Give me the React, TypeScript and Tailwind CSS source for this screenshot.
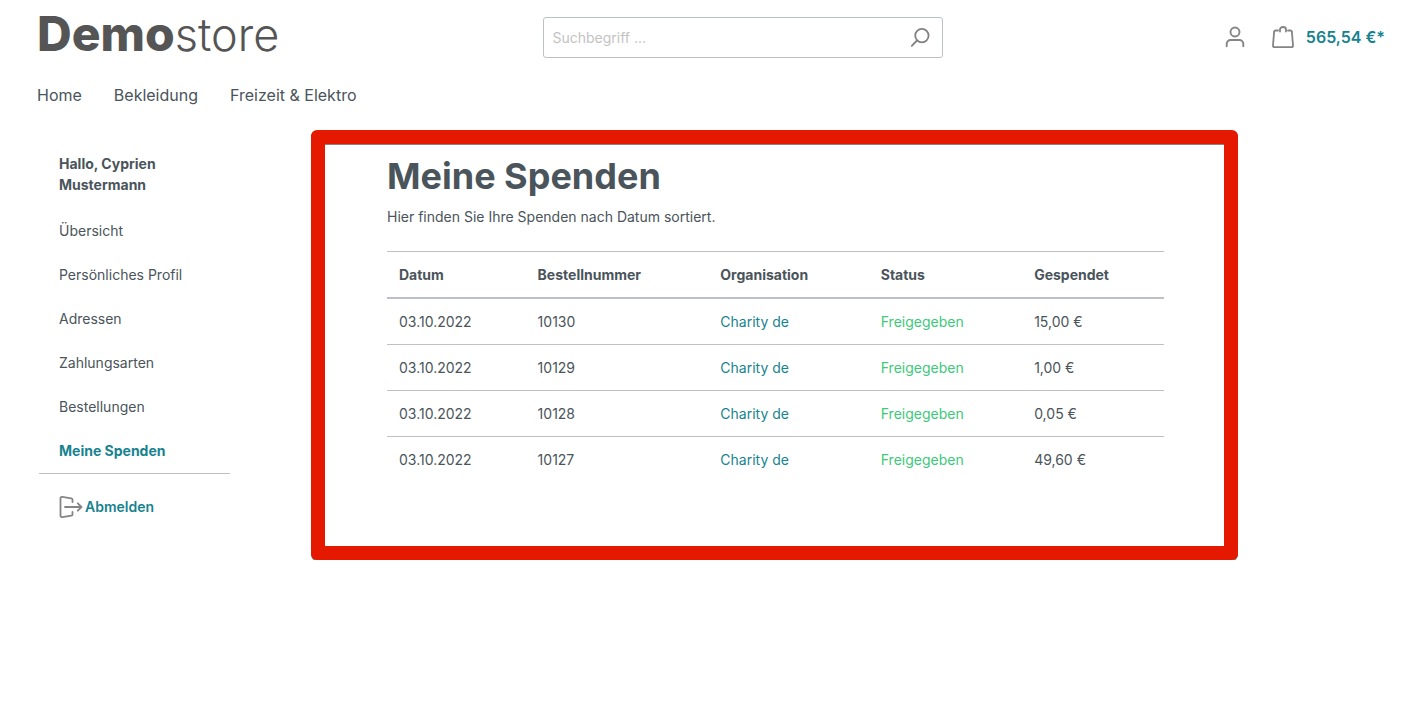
import React from 'react'
import { clsx } from 'clsx'

const navItems = [
    { name: 'Home', href: '#' },
    { name: 'Bekleidung', href: '#bekleidung' },
    { name: 'Freizeit & Elektro', href: '#freizeit' },
]

const accountItems = [
    { name: 'Übersicht', href: '#uebersicht' },
    { name: 'Persönliches Profil', href: '#profil' },
    { name: 'Adressen', href: '#adressen' },
    { name: 'Zahlungsarten', href: '#zahlungsarten' },
    { name: 'Bestellungen', href: '#bestellungen' },
    { name: 'Meine Spenden', href: '#spenden', active: true },
]

const columns = ['Datum', 'Bestellnummer', 'Organisation', 'Status', 'Gespendet']

const donations = [
    { date: '03.10.2022', order: '10130', organisation: 'Charity de', status: 'Freigegeben', amount: '15,00 €' },
    { date: '03.10.2022', order: '10129', organisation: 'Charity de', status: 'Freigegeben', amount: '1,00 €' },
    { date: '03.10.2022', order: '10128', organisation: 'Charity de', status: 'Freigegeben', amount: '0,05 €' },
    { date: '03.10.2022', order: '10127', organisation: 'Charity de', status: 'Freigegeben', amount: '49,60 €' },
]

export default function App() {
    return (
        <div className="font-['Inter',sans-serif] text-sm text-[#4a545b]">
            <Header />
            <div className="flex items-start pl-[39px] pr-[166px] pt-4">
                <AccountSidebar />
                <Donations />
            </div>
        </div>
    )
}

const Header = () => (
    <header className="pl-[37px] pr-[19px] pt-[7px]">
        <div className="flex min-h-15 items-center">
            <a href="#" className="w-[37.5%] self-start text-5xl leading-[54px] text-[#555]">
                <span className="font-extrabold">Demo</span>
                <span className="text-[45px] font-light">store</span>
            </a>
            <form
                className="flex h-[41px] w-[400px] items-center rounded-[3px] border border-[#bcc1c7]"
                onSubmit={(e) => e.preventDefault()}>
                <input
                    type="search"
                    aria-label="Suchbegriff"
                    placeholder="Suchbegriff ..."
                    className="h-full min-w-0 flex-1 px-[9px] outline-none placeholder:text-[#c3c3c3]"
                />
                <button type="submit" aria-label="Suchen" className="px-3">
                    <SearchIcon />
                </button>
            </form>
            <div className="flex flex-1 items-center justify-end">
                <button type="button" aria-label="Mein Konto" className="mr-[26px]">
                    <AvatarIcon />
                </button>
                <a href="#warenkorb" className="flex items-center gap-3 text-base font-semibold text-[#17838f]">
                    <BagIcon />
                    565,54 €*
                </a>
            </div>
        </div>
        <nav className="flex gap-8 pb-[7px] pt-4 text-base">
            {navItems.map((item) => (
                <a key={item.name} href={item.href}>
                    {item.name}
                </a>
            ))}
        </nav>
    </header>
)

const AccountSidebar = () => (
    <aside className="w-[191px] shrink-0 pt-[23px]">
        <p className="px-5 pb-[14px] font-bold leading-[21px]">Hallo, Cyprien Mustermann</p>
        <ul className="border-b border-[#bcc1c7]">
            {accountItems.map((item) => (
                <li key={item.name}>
                    <a
                        href={item.href}
                        className={clsx('block px-5 py-3', item.active && 'font-bold text-[#17838f]')}>
                        {item.name}
                    </a>
                </li>
            ))}
        </ul>
        <a href="#abmelden" className="flex items-center gap-[2px] px-5 py-[22px] font-semibold text-[#17838f]">
            <LogoutIcon />
            Abmelden
        </a>
    </aside>
)

const Donations = () => (
    <main className="ml-[81px] flex-1 rounded-md bg-[#e51900] p-[14px] shadow-[0_1px_0_#858585]">
        <div className="border-t border-[#858585] bg-white pb-16 pl-[62px] pr-[60px] pt-[7px]">
            <h1 className="text-4xl font-bold leading-12">Meine Spenden</h1>
            <p className="pb-6 pt-[7px]">Hier finden Sie Ihre Spenden nach Datum sortiert.</p>
            <table className="w-full border-t border-[#bcc1c7] text-left">
                <thead>
                    <tr className="border-b-2 border-[#bcc1c7]">
                        {columns.map((column) => (
                            <th key={column} className="px-3 py-3 font-bold leading-[21px]">
                                {column}
                            </th>
                        ))}
                    </tr>
                </thead>
                <tbody className="divide-y divide-[#bcc1c7]">
                    {donations.map((donation) => (
                        <tr key={donation.order} className="leading-[21px]">
                            <td className="p-3">{donation.date}</td>
                            <td className="p-3">{donation.order}</td>
                            <td className="p-3">
                                <a href="#charity" className="text-[#17838f]">
                                    {donation.organisation}
                                </a>
                            </td>
                            <td className="p-3 text-[#3cc979]">{donation.status}</td>
                            <td className="p-3">{donation.amount}</td>
                        </tr>
                    ))}
                </tbody>
            </table>
        </div>
    </main>
)

const SearchIcon = () => (
    <svg width="22" height="22" viewBox="0 0 22 22" fill="none" stroke="#808080" strokeWidth="1.8" strokeLinecap="round">
        <circle cx="13.9" cy="9.6" r="6.7" />
        <path d="M9 14.5 3.8 19.8" />
    </svg>
)

const AvatarIcon = () => (
    <svg width="22" height="22" viewBox="0 0 22 22" fill="none" stroke="#858585" strokeWidth="1.9" strokeLinecap="round">
        <circle cx="11" cy="6" r="4.5" />
        <path d="M2.700 20.300v-2.300a4 4 0 0 1 4-4h8.600a4 4 0 0 1 4 4v2.300" />
    </svg>
)

const BagIcon = () => (
    <svg width="22" height="22" viewBox="0 0 22 22" fill="none" stroke="#858585" strokeWidth="1.8" strokeLinecap="round" strokeLinejoin="round">
        <path d="M6 4.500H3.600c-.9 0-1.500.6-1.500 1.400L1 19.400c0 1 .6 1.700 1.500 1.700h17c.9 0 1.500-.7 1.500-1.700L19.900 5.900c0-.8-.6-1.400-1.500-1.400H16" />
        <path d="M8 5.600V3.400C8 1.900 9.200 1 11 1s3 .9 3 2.400v2.200" />
    </svg>
)

const LogoutIcon = () => (
    <svg width="24" height="22" viewBox="0 0 24 22" fill="none" stroke="#858585" strokeWidth="1.8" strokeLinecap="round" strokeLinejoin="round">
        <path d="M13.500 6V3.600c0-.7-.5-1.200-1.200-1.300L3.200.9C2.200.8 1.500 1.300 1.500 2.300v17.400c0 1 .7 1.500 1.700 1.400l9.100-1.400c.7-.1 1.200-.6 1.200-1.300V16" />
        <path d="M6 11h16.500M18.800 7.300l3.700 3.700-3.700 3.700" />
    </svg>
)
